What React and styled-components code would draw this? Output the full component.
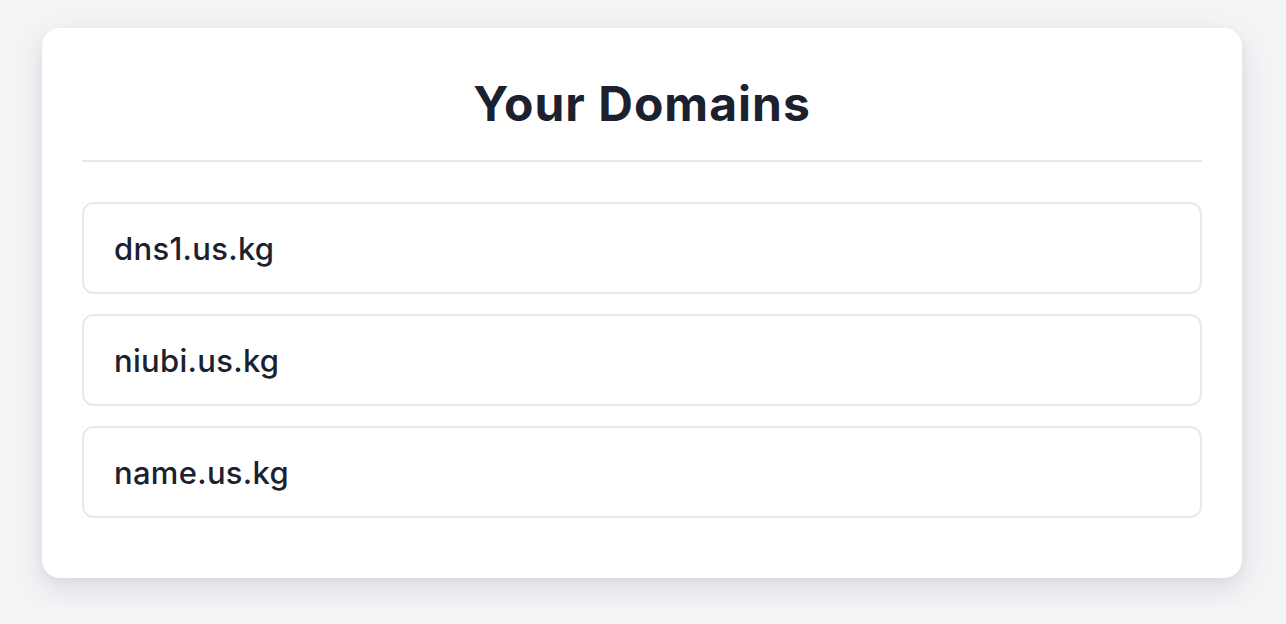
import React from 'react';
import styled, { createGlobalStyle } from 'styled-components';

const GlobalStyle = createGlobalStyle`
    body {
        margin: 0;
        background: #f3f4f6;
        font-family: Inter, "Noto Sans", sans-serif;
        color: #1c2130;
    }
`;

const Page = styled.div`
    padding: 28px 44px 28px 42px;
`;

const Card = styled.section`
    max-width: 1200px;
    margin: 0 auto;
    box-sizing: border-box;
    background: #ffffff;
    border-radius: 18px;
    padding: 40px;
    box-shadow: 0 10px 30px rgba(17, 24, 39, 0.1), 0 4px 10px rgba(17, 24, 39, 0.04);
`;

const Title = styled.h1`
    margin: 0 0 40px;
    padding: 8px 0 28px;
    border-bottom: 2px solid #e5e9f0;
    text-align: center;
    font-size: 48px;
    line-height: 56px;
    font-weight: 700;
    letter-spacing: 1px;
    color: #1c2130;
`;

const List = styled.ul`
    list-style: none;
    margin: 0;
    padding: 0;
`;

const Item = styled.li`
    display: flex;
    align-items: center;
    height: 92px;
    box-sizing: border-box;
    margin-bottom: 20px;
    padding: 0 30px;
    border: 2px solid #e5e8ee;
    border-radius: 12px;
    font-size: 31px;
    font-weight: 500;
    letter-spacing: 0.3px;
    color: #1c2130;
`;

const domains = ['dns1.us.kg', 'niubi.us.kg', 'name.us.kg'];

const App = () => (
    <>
        <GlobalStyle />
        <Page>
            <Card>
                <Title>Your Domains</Title>
                <List>
                    {domains.map(d => (
                        <Item key={d}>{d}</Item>
                    ))}
                </List>
            </Card>
        </Page>
    </>
);

export default App;
